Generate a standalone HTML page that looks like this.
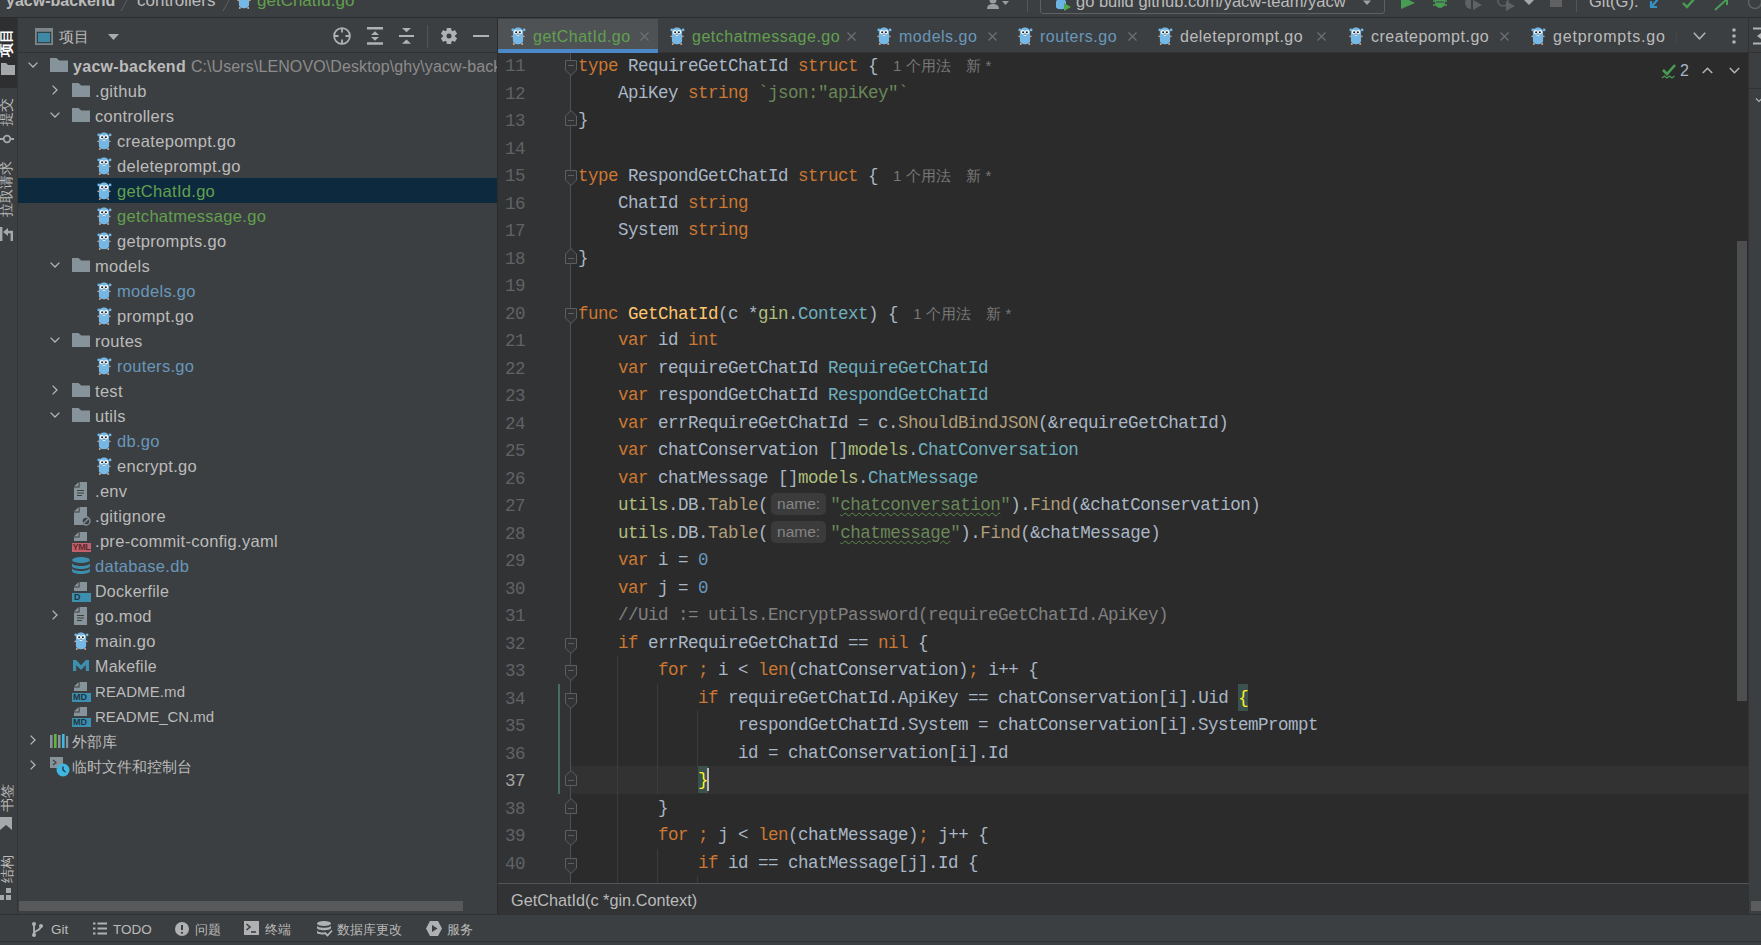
<!DOCTYPE html><html><head><meta charset="utf-8"><style>
*{margin:0;padding:0;box-sizing:border-box}
html,body{width:1761px;height:945px;overflow:hidden;background:#3c3f41;font-family:"Liberation Sans",sans-serif;color:#bbbbbb}
.a{position:absolute}
svg.a{overflow:visible}
.t{position:absolute;white-space:pre;line-height:25px;font-size:16.5px;letter-spacing:0.3px;margin-top:1px}
.code{position:absolute;left:578px;margin-top:1px;white-space:pre;font-family:"Liberation Mono",monospace;font-size:17.5px;letter-spacing:-0.5px;line-height:27.5px;height:27.5px;color:#a9b7c6}
.k{color:#cc7832}.s{color:#6a8759}.n{color:#6897bb}.p{color:#afbf7e}.ty{color:#6fafbd}.fn{color:#ffc66d}.mc{color:#b09d79}.cm{color:#808080}
.ln{position:absolute;left:499px;width:26px;text-align:right;font-family:"Liberation Mono",monospace;font-size:17.5px;letter-spacing:-0.5px;margin-top:2px;color:#606366;line-height:27.5px}
.hint{font-family:"Liberation Sans",sans-serif;font-size:15px;letter-spacing:0;color:#787878;margin-left:15px}
.tab{position:absolute;top:22px;height:30px;line-height:30px;font-size:16px;letter-spacing:0.5px;white-space:pre}
.bt{position:absolute;top:914px;line-height:31px;font-size:13.5px;color:#bbbbbb;white-space:pre}
.inl{display:inline-block;font-family:"Liberation Sans",sans-serif;font-size:15.5px;letter-spacing:0;color:#858585;background:#3b3b3b;border-radius:5px;padding:0 6px 0 6px;margin:0 4px 0 3px;line-height:22px;height:22px;vertical-align:1px}
.sq{text-decoration:underline wavy #5b8a49;text-decoration-thickness:1px;text-underline-offset:2px}
.bm{color:#ffef28}
.vt{position:absolute;font-size:13.5px;line-height:17px;white-space:pre;color:#bbbbbb}
</style></head><body>
<svg width="0" height="0" style="position:absolute">
<defs>
<symbol id="go" viewBox="0 0 13 19" overflow="visible">
 <circle cx="0.8" cy="3.9" r="1.4" fill="#75b8e6"/><circle cx="12.1" cy="3.9" r="1.4" fill="#75b8e6"/>
 <path d="M0.9 6.5C0.9 -0.3 11.1 -0.3 11.1 6.5V14.5C11.1 19.6 0.9 19.6 0.9 14.5Z" fill="#75b8e6"/>
 <circle cx="3.8" cy="6.1" r="2.1" fill="#fff"/><circle cx="8.2" cy="6.1" r="2.1" fill="#fff"/>
 <circle cx="4.1" cy="6.2" r="0.95" fill="#111"/><circle cx="7.9" cy="6.2" r="0.95" fill="#111"/>
 <ellipse cx="6" cy="9" rx="1.4" ry="1.1" fill="#e8f0f5"/>
 <ellipse cx="6" cy="8.5" rx="0.9" ry="0.6" fill="#8a6a55"/>
 <circle cx="0.2" cy="10.4" r="0.8" fill="#d7a988"/><circle cx="11.8" cy="10.4" r="0.8" fill="#d7a988"/>
 <circle cx="1.8" cy="17.9" r="1" fill="#d7a988"/><circle cx="10.2" cy="17.9" r="1" fill="#d7a988"/>
</symbol>
<symbol id="fold" viewBox="0 0 18 14"><path d="M0 0H6.5L9.2 2.6H18V14H0Z" fill="#87939a"/></symbol>
<symbol id="file" viewBox="0 0 13 18"><path d="M5.6 0H13V18H0V5.6H5.6Z" fill="#87939a"/><path d="M0 4.6L4.6 0V4.6Z" fill="#87939a"/></symbol>
<symbol id="chd" viewBox="0 0 10 6"><path d="M0.6 0.6L5 5L9.4 0.6" fill="none" stroke="#b4b6b8" stroke-width="1.3"/></symbol>
<symbol id="chr" viewBox="0 0 6 10"><path d="M0.6 0.6L5 5L0.6 9.4" fill="none" stroke="#b4b6b8" stroke-width="1.3"/></symbol>
<symbol id="x" viewBox="0 0 9 9"><path d="M0.5 0.5L8.5 8.5M8.5 0.5L0.5 8.5" stroke="#6e7072" stroke-width="1.2"/></symbol>
<symbol id="foldo" viewBox="0 0 12 16"><path d="M0.5 0.5H11.5V10L6 15.5L0.5 10Z" fill="#313335" stroke="#5c5f61" stroke-width="1"/><path d="M3 5.5H9" stroke="#5c5f61" stroke-width="1"/></symbol>
<symbol id="foldc" viewBox="0 0 12 16"><path d="M0.5 15.5H11.5V6L6 0.5L0.5 6Z" fill="#313335" stroke="#5c5f61" stroke-width="1"/><path d="M3 10.5H9" stroke="#5c5f61" stroke-width="1"/></symbol>
</defs></svg>
<div class="a" style="left:0;top:0;width:1761px;height:18px;background:#3c3f41;border-bottom:1px solid #2b2b2b"></div><div class="a" style="left:6px;top:-12px;font-size:16px;font-weight:bold;line-height:25px;white-space:pre;color:#bbbbbb">yacw-backend</div><svg class="a" style="left:120px;top:0px;" width="8" height="12" viewBox="0 0 8 12"><path d="M7 0L1 11" stroke="#5e6164" stroke-width="1"/></svg><div class="a" style="left:137px;top:-12px;font-size:17px;line-height:25px;white-space:pre;color:#bbbbbb">controllers</div><svg class="a" style="left:222px;top:0px;" width="8" height="12" viewBox="0 0 8 12"><path d="M7 0L1 11" stroke="#5e6164" stroke-width="1"/></svg><svg class="a" style="left:238px;top:-10px" width="13" height="19"><use href="#go"/></svg><div class="a" style="left:257px;top:-12px;font-size:17px;line-height:25px;white-space:pre;color:#62a04f">getChatId.go</div><svg class="a" style="left:985px;top:0px;" width="26" height="10" viewBox="0 0 26 10"><path d="M2 9C2 5 5 4 8 4C11 4 14 5 14 9Z" fill="#9a9c9e"/><circle cx="8" cy="0" r="3.5" fill="#9a9c9e"/><path d="M17 1H24L20.5 5Z" fill="#9a9c9e"/></svg><div class="a" style="left:1027px;top:0;width:1px;height:12px;background:#555"></div><div class="a" style="left:1040px;top:-12px;width:345px;height:26px;border:1px solid #5e6162;border-radius:3px"></div><svg class="a" style="left:1055px;top:0px;" width="17" height="12" viewBox="0 0 17 12"><path d="M1 2C1 -2 11 -2 11 2V7C11 10 1 10 1 7Z" fill="#6cb4e4"/><path d="M9 3L16 7L9 11Z" fill="#4fa849"/></svg><div class="a" style="left:1076px;top:-11px;font-size:16.5px;line-height:25px;white-space:pre;color:#bbbbbb">go build github.com/yacw-team/yacw</div><svg class="a" style="left:1363px;top:0px;" width="9" height="6" viewBox="0 0 9 6"><path d="M0 0.5H8L4 5Z" fill="#a0a2a4"/></svg><svg class="a" style="left:1401px;top:0px;" width="14" height="9" viewBox="0 0 14 9"><path d="M0 -4L14 3L0 9Z" fill="#499c54"/></svg><svg class="a" style="left:1432px;top:0px;" width="16" height="9" viewBox="0 0 16 9"><ellipse cx="8" cy="2" rx="5" ry="6" fill="#499c54"/><path d="M1 1H15M1 5H15" stroke="#499c54" stroke-width="1.5"/><path d="M4 2H12" stroke="#3c3f41" stroke-width="1"/></svg><svg class="a" style="left:1463px;top:0px;" width="20" height="10" viewBox="0 0 20 10"><path d="M8 -3A6 6 0 1 0 8 9Z" fill="#5f6163"/><path d="M10 0L19 5L10 10Z" fill="#5f6163"/></svg><svg class="a" style="left:1497px;top:0px;" width="20" height="10" viewBox="0 0 20 10"><circle cx="6" cy="1" r="5" fill="none" stroke="#5f6163" stroke-width="1.5"/><path d="M9 1L18 6L9 11Z" fill="#5f6163"/></svg><svg class="a" style="left:1524px;top:0px;" width="10" height="6" viewBox="0 0 10 6"><path d="M0 0H10L5 5Z" fill="#a5a7a9"/></svg><svg class="a" style="left:1550px;top:0px;" width="12" height="7" viewBox="0 0 12 7"><rect x="0" y="-5" width="12" height="12" fill="#5f6163"/></svg><div class="a" style="left:1576px;top:0;width:1px;height:12px;background:#555"></div><div class="a" style="left:1589px;top:-11px;font-size:16.5px;line-height:25px;white-space:pre;color:#bbbbbb">Git(G):</div><svg class="a" style="left:1650px;top:0px;" width="10" height="9" viewBox="0 0 10 9"><path d="M9 -2L2 6M1 1V7H7" stroke="#3592c4" stroke-width="2.2" fill="none"/></svg><svg class="a" style="left:1682px;top:0px;" width="14" height="9" viewBox="0 0 14 9"><path d="M1 3L5 7L13 -2" stroke="#499c54" stroke-width="2.4" fill="none"/></svg><svg class="a" style="left:1714px;top:0px;" width="15" height="11" viewBox="0 0 15 11"><path d="M1 10L13 -1M7 -1H13V5" stroke="#499c54" stroke-width="2" fill="none"/></svg><svg class="a" style="left:1746px;top:0px;" width="15" height="10" viewBox="0 0 15 10"><circle cx="9" cy="2" r="6.5" fill="none" stroke="#5f6163" stroke-width="1.5"/></svg><div class="a" style="left:0;top:18px;width:18px;height:896px;background:#3c3f41;border-right:1px solid #323435"></div><div class="a" style="left:0;top:18px;width:17px;height:70px;background:#2d2f31"></div><div class="vt" style="left:0;top:31px;width:17px;height:26px;"><div style="position:absolute;left:-2px;top:26px;width:max-content;white-space:nowrap;transform-origin:0 0;transform:rotate(-90deg);color:#ffffff;font-weight:bold">项目</div></div><svg class="a" style="left:1px;top:63px;" width="14" height="12" viewBox="0 0 14 12"><path d="M0 0H5L7 2H14V12H0Z" fill="#a5a8aa"/></svg><div class="vt" style="left:0;top:98px;width:17px;height:28px;"><div style="position:absolute;left:-2px;top:28px;width:max-content;white-space:nowrap;transform-origin:0 0;transform:rotate(-90deg)">提交</div></div><svg class="a" style="left:0px;top:134px;" width="14" height="10" viewBox="0 0 14 10"><circle cx="7" cy="5" r="3.3" fill="none" stroke="#a5a8aa" stroke-width="1.8"/><path d="M0 5H3.5M10.5 5H14" stroke="#a5a8aa" stroke-width="1.8"/></svg><div class="vt" style="left:0;top:161px;width:17px;height:56px;"><div style="position:absolute;left:-2px;top:56px;width:max-content;white-space:nowrap;transform-origin:0 0;transform:rotate(-90deg)">拉取请求</div></div><svg class="a" style="left:0px;top:227px;" width="14" height="14" viewBox="0 0 14 14"><path d="M1.2 0V14" stroke="#a5a8aa" stroke-width="2.4"/><path d="M3 5L8 1V9Z" fill="#a5a8aa"/><path d="M7 5H11.8V14" stroke="#a5a8aa" stroke-width="2.4" fill="none"/></svg><div class="vt" style="left:0;top:784px;width:17px;height:28px;"><div style="position:absolute;left:-1px;top:28px;width:max-content;white-space:nowrap;transform-origin:0 0;transform:rotate(-90deg)">书签</div></div><svg class="a" style="left:0px;top:817px;" width="12" height="14" viewBox="0 0 12 14"><path d="M0 0H12V13L6 8L0 13Z" fill="#a5a8aa"/></svg><div class="vt" style="left:0;top:855px;width:17px;height:28px;"><div style="position:absolute;left:-1px;top:28px;width:max-content;white-space:nowrap;transform-origin:0 0;transform:rotate(-90deg)">结构</div></div><svg class="a" style="left:-1px;top:888px;" width="12" height="12" viewBox="0 0 12 12"><rect x="7" y="0" width="5" height="5" fill="#a5a8aa"/><rect x="0" y="7" width="5" height="5" fill="#a5a8aa"/><rect x="7" y="7" width="5" height="5" fill="#a5a8aa"/></svg><div class="a" style="left:18px;top:18px;width:480px;height:896px;background:#3c3f41"></div><div class="a" style="left:18px;top:52px;width:480px;height:1px;background:#323232"></div><svg class="a" style="left:35px;top:28px;" width="18" height="17" viewBox="0 0 18 17"><rect x="0" y="0" width="18" height="17" fill="#7d868b"/><rect x="1.8" y="3.8" width="14.4" height="11.4" fill="#2f3234"/><rect x="2.8" y="4.8" width="12.4" height="9.4" fill="#3e8aa6"/></svg><div class="a" style="left:59px;top:24px;font-size:15px;line-height:25px;white-space:pre;color:#bbbbbb">项目</div><svg class="a" style="left:108px;top:34px;" width="12" height="6" viewBox="0 0 12 6"><path d="M0 0H11L5.5 6Z" fill="#a9abad"/></svg><svg class="a" style="left:333px;top:27px;" width="19" height="19" viewBox="0 0 19 19"><circle cx="9" cy="9" r="7.9" fill="none" stroke="#afb1b3" stroke-width="1.8"/><path d="M9 1V5.5M9 12.5V17M1 9H5.5M12.5 9H17" stroke="#afb1b3" stroke-width="1.8"/></svg><svg class="a" style="left:367px;top:27px;" width="16" height="18" viewBox="0 0 16 18"><path d="M0 1.3H16M0 16.5H16" stroke="#afb1b3" stroke-width="2.4"/><path d="M4 8L8 4.2L12 8ZM4 10L8 13.8L12 10Z" fill="#afb1b3"/></svg><svg class="a" style="left:399px;top:27px;" width="16" height="18" viewBox="0 0 16 18"><path d="M0 9H15" stroke="#afb1b3" stroke-width="2"/><path d="M3 1H12L7.5 5.3ZM3 16.7H12L7.5 12.5Z" fill="#afb1b3"/></svg><div class="a" style="left:427px;top:25px;width:1px;height:23px;background:#515456"></div><svg class="a" style="left:441px;top:28px;" width="16" height="16" viewBox="0 0 16 16"><path d="M13.97 8.62 L16.11 10.19 L13.95 13.93 L11.52 12.86 L10.45 13.48 L10.16 16.12 L5.84 16.12 L5.55 13.48 L4.48 12.86 L2.05 13.93 L-0.11 10.19 L2.03 8.62 L2.03 7.38 L-0.11 5.81 L2.05 2.07 L4.48 3.14 L5.55 2.52 L5.84 -0.12 L10.16 -0.12 L10.45 2.52 L11.52 3.14 L13.95 2.07 L16.11 5.81 L13.97 7.38Z" fill="#afb1b3"/><circle cx="8" cy="8" r="6.1" fill="#afb1b3"/><circle cx="8" cy="8" r="2.5" fill="#3c3f41"/></svg><div class="a" style="left:473px;top:35px;width:16px;height:2.4px;background:#afb1b3"></div><div class="a" style="left:18px;top:178px;width:479px;height:25px;background:#0d293e"></div><div class="a" style="left:18px;top:53px;width:479px;height:848px;overflow:hidden"><svg class="a" style="left:10px;top:9px;" width="10" height="6"><use href="#chd"/></svg><svg class="a" style="left:32px;top:5px;" width="18" height="14"><use href="#fold"/></svg><div class="t" style="left:55px;top:0px;"><span style="color:#bbbbbb"><b style="font-size:16px">yacw-backend</b> <span style="color:#8c8c8c;font-size:16px;letter-spacing:0.1px">C:\Users\LENOVO\Desktop\ghy\yacw-backend</span></span></div><svg class="a" style="left:34px;top:32px;" width="6" height="10"><use href="#chr"/></svg><svg class="a" style="left:54px;top:30px;" width="18" height="14"><use href="#fold"/></svg><div class="t" style="left:77px;top:25px;"><span style="color:#bbbbbb">.github</span></div><svg class="a" style="left:32px;top:59px;" width="10" height="6"><use href="#chd"/></svg><svg class="a" style="left:54px;top:55px;" width="18" height="14"><use href="#fold"/></svg><div class="t" style="left:77px;top:50px;"><span style="color:#bbbbbb">controllers</span></div><svg class="a" style="left:80px;top:78px;" width="13" height="19"><use href="#go"/></svg><div class="t" style="left:99px;top:75px;"><span style="color:#bbbbbb">createpompt.go</span></div><svg class="a" style="left:80px;top:103px;" width="13" height="19"><use href="#go"/></svg><div class="t" style="left:99px;top:100px;"><span style="color:#bbbbbb">deleteprompt.go</span></div><svg class="a" style="left:80px;top:128px;" width="13" height="19"><use href="#go"/></svg><div class="t" style="left:99px;top:125px;"><span style="color:#62a04f">getChatId.go</span></div><svg class="a" style="left:80px;top:153px;" width="13" height="19"><use href="#go"/></svg><div class="t" style="left:99px;top:150px;"><span style="color:#62a04f">getchatmessage.go</span></div><svg class="a" style="left:80px;top:178px;" width="13" height="19"><use href="#go"/></svg><div class="t" style="left:99px;top:175px;"><span style="color:#bbbbbb">getprompts.go</span></div><svg class="a" style="left:32px;top:209px;" width="10" height="6"><use href="#chd"/></svg><svg class="a" style="left:54px;top:205px;" width="18" height="14"><use href="#fold"/></svg><div class="t" style="left:77px;top:200px;"><span style="color:#bbbbbb">models</span></div><svg class="a" style="left:80px;top:228px;" width="13" height="19"><use href="#go"/></svg><div class="t" style="left:99px;top:225px;"><span style="color:#6897bb">models.go</span></div><svg class="a" style="left:80px;top:253px;" width="13" height="19"><use href="#go"/></svg><div class="t" style="left:99px;top:250px;"><span style="color:#bbbbbb">prompt.go</span></div><svg class="a" style="left:32px;top:284px;" width="10" height="6"><use href="#chd"/></svg><svg class="a" style="left:54px;top:280px;" width="18" height="14"><use href="#fold"/></svg><div class="t" style="left:77px;top:275px;"><span style="color:#bbbbbb">routes</span></div><svg class="a" style="left:80px;top:303px;" width="13" height="19"><use href="#go"/></svg><div class="t" style="left:99px;top:300px;"><span style="color:#6897bb">routers.go</span></div><svg class="a" style="left:34px;top:332px;" width="6" height="10"><use href="#chr"/></svg><svg class="a" style="left:54px;top:330px;" width="18" height="14"><use href="#fold"/></svg><div class="t" style="left:77px;top:325px;"><span style="color:#bbbbbb">test</span></div><svg class="a" style="left:32px;top:359px;" width="10" height="6"><use href="#chd"/></svg><svg class="a" style="left:54px;top:355px;" width="18" height="14"><use href="#fold"/></svg><div class="t" style="left:77px;top:350px;"><span style="color:#bbbbbb">utils</span></div><svg class="a" style="left:80px;top:378px;" width="13" height="19"><use href="#go"/></svg><div class="t" style="left:99px;top:375px;"><span style="color:#6897bb">db.go</span></div><svg class="a" style="left:80px;top:403px;" width="13" height="19"><use href="#go"/></svg><div class="t" style="left:99px;top:400px;"><span style="color:#bbbbbb">encrypt.go</span></div><svg class="a" style="left:56px;top:429px;" width="13" height="18"><use href="#file"/></svg><svg class="a" style="left:59px;top:437px;" width="7" height="7" viewBox="0 0 7 7"><path d="M0 0.5H7M0 3H7M0 5.5H5" stroke="#3c3f41" stroke-width="1"/></svg><div class="t" style="left:77px;top:425px;"><span style="color:#bbbbbb">.env</span></div><svg class="a" style="left:56px;top:454px;" width="13" height="18"><use href="#file"/></svg><svg class="a" style="left:63px;top:463px;" width="10" height="10" viewBox="0 0 10 10"><circle cx="5" cy="5" r="4" fill="#3c3f41" stroke="#87939a" stroke-width="1.3"/><path d="M2.5 7.5L7.5 2.5" stroke="#87939a" stroke-width="1.3"/></svg><div class="t" style="left:77px;top:450px;"><span style="color:#bbbbbb">.gitignore</span></div><svg class="a" style="left:56px;top:479px;" width="13" height="9" viewBox="0 0 13 9"><path d="M5.6 0H13V9H0V5.6H5.6Z" fill="#87939a"/><path d="M0 4.6L4.6 0V4.6Z" fill="#87939a"/></svg><div class="a" style="left:54px;top:490px;width:19px;height:9px;background:#c3606a;color:#5a2a30;font-size:9px;line-height:9px;text-align:center;font-weight:bold;letter-spacing:-0.3px">YML</div><div class="t" style="left:77px;top:475px;"><span style="color:#bbbbbb">.pre-commit-config.yaml</span></div><svg class="a" style="left:54px;top:504px;" width="18" height="18" viewBox="0 0 18 18"><ellipse cx="9" cy="3" rx="9" ry="3" fill="#3d8fb0"/><path d="M0 6C0 10 18 10 18 6V9C18 13 0 13 0 9Z" fill="#3d8fb0"/><path d="M0 11C0 15 18 15 18 11V14C18 18 0 18 0 14Z" fill="#3d8fb0"/></svg><div class="t" style="left:77px;top:500px;"><span style="color:#6897bb">database.db</span></div><svg class="a" style="left:56px;top:529px;" width="13" height="9" viewBox="0 0 13 9"><path d="M5.6 0H13V9H0V5.6H5.6Z" fill="#87939a"/><path d="M0 4.6L4.6 0V4.6Z" fill="#87939a"/></svg><div class="a" style="left:54px;top:540px;width:19px;height:9px;background:#3d8fb0;color:#1f3540;font-size:9px;line-height:9px;padding-left:2px;font-weight:bold">D</div><div class="t" style="left:77px;top:525px;"><span style="color:#bbbbbb"><span style="font-size:16px">Dockerfile</span></span></div><svg class="a" style="left:34px;top:557px;" width="6" height="10"><use href="#chr"/></svg><svg class="a" style="left:56px;top:554px;" width="13" height="18"><use href="#file"/></svg><svg class="a" style="left:59px;top:562px;" width="7" height="7" viewBox="0 0 7 7"><path d="M0 0.5H7M0 3H7M0 5.5H5" stroke="#3c3f41" stroke-width="1"/></svg><div class="t" style="left:77px;top:550px;"><span style="color:#bbbbbb">go.mod</span></div><svg class="a" style="left:57px;top:578px;" width="13" height="19"><use href="#go"/></svg><div class="t" style="left:77px;top:575px;"><span style="color:#bbbbbb">main.go</span></div><svg class="a" style="left:55px;top:607px;" width="16" height="11" viewBox="0 0 16 11"><path d="M0 11V0H3.2L8 5.2L12.8 0H16V11H12.8V5L8 10L3.2 5V11Z" fill="#3d8fb0"/></svg><div class="t" style="left:77px;top:600px;"><span style="color:#bbbbbb"><span style="font-size:16px">Makefile</span></span></div><svg class="a" style="left:56px;top:629px;" width="13" height="9" viewBox="0 0 13 9"><path d="M5.6 0H13V9H0V5.6H5.6Z" fill="#87939a"/><path d="M0 4.6L4.6 0V4.6Z" fill="#87939a"/></svg><div class="a" style="left:54px;top:640px;width:19px;height:9px;background:#3d8fb0;color:#1f3540;font-size:9px;line-height:9px;padding-left:1px;font-weight:bold">MD</div><div class="t" style="left:77px;top:625px;"><span style="color:#bbbbbb"><span style="font-size:15px;letter-spacing:0.1px">README.md</span></span></div><svg class="a" style="left:56px;top:654px;" width="13" height="9" viewBox="0 0 13 9"><path d="M5.6 0H13V9H0V5.6H5.6Z" fill="#87939a"/><path d="M0 4.6L4.6 0V4.6Z" fill="#87939a"/></svg><div class="a" style="left:54px;top:665px;width:19px;height:9px;background:#3d8fb0;color:#1f3540;font-size:9px;line-height:9px;padding-left:1px;font-weight:bold">MD</div><div class="t" style="left:77px;top:650px;"><span style="color:#bbbbbb"><span style="font-size:15px;letter-spacing:0">README_CN.md</span></span></div><svg class="a" style="left:12px;top:682px;" width="6" height="10"><use href="#chr"/></svg><svg class="a" style="left:32px;top:681px;" width="18" height="14" viewBox="0 0 18 14"><rect x="0" y="1" width="2.6" height="13" fill="#87939a"/><rect x="4" y="0" width="2.6" height="14" fill="#62b543"/><rect x="8" y="1" width="2.6" height="13" fill="#87939a"/><rect x="12" y="0" width="2.6" height="14" fill="#40b6e0"/><rect x="16" y="2" width="2.2" height="12" fill="#87939a"/></svg><div class="t" style="left:54px;top:675px;"><span style="color:#bbbbbb"><span style="font-size:15px;letter-spacing:0">外部库</span></span></div><svg class="a" style="left:12px;top:707px;" width="6" height="10"><use href="#chr"/></svg><svg class="a" style="left:32px;top:704px;" width="20" height="20" viewBox="0 0 20 20"><rect x="0" y="0" width="13" height="11" fill="#87939a"/><path d="M3 3L6 5.5L3 8" stroke="#3c3f41" stroke-width="1.2" fill="none"/><circle cx="13" cy="13" r="6.5" fill="#40b6e0"/><path d="M13 9.5V13L15.5 15" stroke="#1d3b47" stroke-width="1.4" fill="none"/></svg><div class="t" style="left:54px;top:700px;"><span style="color:#bbbbbb"><span style="font-size:15px;letter-spacing:0">临时文件和控制台</span></span></div></div><div class="a" style="left:19px;top:901px;width:444px;height:10px;background:#57595b"></div><div class="a" style="left:497px;top:18px;width:1px;height:896px;background:#2b2b2b"></div><div class="a" style="left:498px;top:18px;width:1251px;height:35px;background:#3c3f41;border-bottom:1px solid #323232"></div><div class="a" style="left:498px;top:19px;width:160px;height:30px;background:#4e5254"></div><div class="a" style="left:498px;top:49px;width:160px;height:4px;background:#4a88c7"></div><svg class="a" style="left:512px;top:26px;" width="13" height="19"><use href="#go"/></svg><div class="tab" style="left:533px;color:#62a04f">getChatId.go</div><svg class="a" style="left:640px;top:32px;" width="9" height="9"><use href="#x"/></svg><svg class="a" style="left:671px;top:26px;" width="13" height="19"><use href="#go"/></svg><div class="tab" style="left:692px;color:#62a04f">getchatmessage.go</div><svg class="a" style="left:847px;top:32px;" width="9" height="9"><use href="#x"/></svg><svg class="a" style="left:878px;top:26px;" width="13" height="19"><use href="#go"/></svg><div class="tab" style="left:899px;color:#6897bb">models.go</div><svg class="a" style="left:988px;top:32px;" width="9" height="9"><use href="#x"/></svg><svg class="a" style="left:1019px;top:26px;" width="13" height="19"><use href="#go"/></svg><div class="tab" style="left:1040px;color:#6897bb">routers.go</div><svg class="a" style="left:1128px;top:32px;" width="9" height="9"><use href="#x"/></svg><svg class="a" style="left:1159px;top:26px;" width="13" height="19"><use href="#go"/></svg><div class="tab" style="left:1180px;color:#bbbbbb">deleteprompt.go</div><svg class="a" style="left:1317px;top:32px;" width="9" height="9"><use href="#x"/></svg><svg class="a" style="left:1350px;top:26px;" width="13" height="19"><use href="#go"/></svg><div class="tab" style="left:1371px;color:#bbbbbb">createpompt.go</div><svg class="a" style="left:1500px;top:32px;" width="9" height="9"><use href="#x"/></svg><svg class="a" style="left:1532px;top:26px;" width="13" height="19"><use href="#go"/></svg><div class="tab" style="left:1553px;color:#bbbbbb"><span style="letter-spacing:0.8px">getprompts.go</span></div><svg class="a" style="left:1693px;top:32px;" width="13" height="8" viewBox="0 0 13 8"><path d="M0.8 0.8L6.5 6.8L12.2 0.8" stroke="#afb1b3" stroke-width="1.6" fill="none"/></svg><svg class="a" style="left:1731px;top:27px;" width="6" height="18" viewBox="0 0 6 18"><circle cx="3" cy="3" r="1.8" fill="#afb1b3"/><circle cx="3" cy="9" r="1.8" fill="#afb1b3"/><circle cx="3" cy="15" r="1.8" fill="#afb1b3"/></svg><div class="a" style="left:498px;top:53px;width:1251px;height:830px;background:#2b2b2b"></div><div class="a" style="left:498px;top:53px;width:73px;height:830px;background:#313335"></div><div class="a" style="left:571px;top:766.0px;width:1178px;height:27.5px;background:#323232"></div><div class="a" style="left:498px;top:766.0px;width:73px;height:27.5px;background:#313335"></div><div class="a" style="left:698px;top:766.0px;width:10px;height:27px;background:#3b514d"></div><div class="a" style="left:1238px;top:683.5px;width:10px;height:27px;background:#3b514d"></div><div class="ln" style="top:51.0px;color:#606366">11</div><div class="code" style="top:51.0px"><span class="k">type</span> RequireGetChatId <span class="k">struct</span> {<span class="hint"><span>1</span><span style="margin-left:5px">个用法</span><span style="margin-left:15px">新</span><span style="margin-left:4px">*</span></span></div><div class="ln" style="top:78.5px;color:#606366">12</div><div class="code" style="top:78.5px">    ApiKey <span class="k">string</span> <span class="s">`json:"apiKey"`</span></div><div class="ln" style="top:106.0px;color:#606366">13</div><div class="code" style="top:106.0px">}</div><div class="ln" style="top:133.5px;color:#606366">14</div><div class="code" style="top:133.5px"></div><div class="ln" style="top:161.0px;color:#606366">15</div><div class="code" style="top:161.0px"><span class="k">type</span> RespondGetChatId <span class="k">struct</span> {<span class="hint"><span>1</span><span style="margin-left:5px">个用法</span><span style="margin-left:15px">新</span><span style="margin-left:4px">*</span></span></div><div class="ln" style="top:188.5px;color:#606366">16</div><div class="code" style="top:188.5px">    ChatId <span class="k">string</span></div><div class="ln" style="top:216.0px;color:#606366">17</div><div class="code" style="top:216.0px">    System <span class="k">string</span></div><div class="ln" style="top:243.5px;color:#606366">18</div><div class="code" style="top:243.5px">}</div><div class="ln" style="top:271.0px;color:#606366">19</div><div class="code" style="top:271.0px"></div><div class="ln" style="top:298.5px;color:#606366">20</div><div class="code" style="top:298.5px"><span class="k">func</span> <span class="fn">GetChatId</span>(c *<span class="p">gin</span>.<span class="ty">Context</span>) {<span class="hint"><span>1</span><span style="margin-left:5px">个用法</span><span style="margin-left:15px">新</span><span style="margin-left:4px">*</span></span></div><div class="ln" style="top:326.0px;color:#606366">21</div><div class="code" style="top:326.0px">    <span class="k">var</span> id <span class="k">int</span></div><div class="ln" style="top:353.5px;color:#606366">22</div><div class="code" style="top:353.5px">    <span class="k">var</span> requireGetChatId <span class="ty">RequireGetChatId</span></div><div class="ln" style="top:381.0px;color:#606366">23</div><div class="code" style="top:381.0px">    <span class="k">var</span> respondGetChatId <span class="ty">RespondGetChatId</span></div><div class="ln" style="top:408.5px;color:#606366">24</div><div class="code" style="top:408.5px">    <span class="k">var</span> errRequireGetChatId = c.<span class="mc">ShouldBindJSON</span>(&amp;requireGetChatId)</div><div class="ln" style="top:436.0px;color:#606366">25</div><div class="code" style="top:436.0px">    <span class="k">var</span> chatConservation []<span class="p">models</span>.<span class="ty">ChatConversation</span></div><div class="ln" style="top:463.5px;color:#606366">26</div><div class="code" style="top:463.5px">    <span class="k">var</span> chatMessage []<span class="p">models</span>.<span class="ty">ChatMessage</span></div><div class="ln" style="top:491.0px;color:#606366">27</div><div class="code" style="top:491.0px">    <span class="p">utils</span>.DB.<span class="mc">Table</span>(<span class="inl">name:</span><span class="s">"<span class="sq">chatconversation</span>"</span>).<span class="mc">Find</span>(&amp;chatConservation)</div><div class="ln" style="top:518.5px;color:#606366">28</div><div class="code" style="top:518.5px">    <span class="p">utils</span>.DB.<span class="mc">Table</span>(<span class="inl">name:</span><span class="s">"<span class="sq">chatmessage</span>"</span>).<span class="mc">Find</span>(&amp;chatMessage)</div><div class="ln" style="top:546.0px;color:#606366">29</div><div class="code" style="top:546.0px">    <span class="k">var</span> i = <span class="n">0</span></div><div class="ln" style="top:573.5px;color:#606366">30</div><div class="code" style="top:573.5px">    <span class="k">var</span> j = <span class="n">0</span></div><div class="ln" style="top:601.0px;color:#606366">31</div><div class="code" style="top:601.0px">    <span class="cm">//Uid := utils.EncryptPassword(requireGetChatId.ApiKey)</span></div><div class="ln" style="top:628.5px;color:#606366">32</div><div class="code" style="top:628.5px">    <span class="k">if</span> errRequireGetChatId == <span class="k">nil</span> {</div><div class="ln" style="top:656.0px;color:#606366">33</div><div class="code" style="top:656.0px">        <span class="k">for</span> <span class="k">;</span> i &lt; <span class="k">len</span>(chatConservation)<span class="k">;</span> i++ {</div><div class="ln" style="top:683.5px;color:#606366">34</div><div class="code" style="top:683.5px">            <span class="k">if</span> requireGetChatId.ApiKey == chatConservation[i].Uid <span class="bm">{</span></div><div class="ln" style="top:711.0px;color:#606366">35</div><div class="code" style="top:711.0px">                respondGetChatId.System = chatConservation[i].SystemPrompt</div><div class="ln" style="top:738.5px;color:#606366">36</div><div class="code" style="top:738.5px">                id = chatConservation[i].Id</div><div class="ln" style="top:766.0px;color:#a4a3a3">37</div><div class="code" style="top:766.0px">            <span class="bm">}</span></div><div class="ln" style="top:793.5px;color:#606366">38</div><div class="code" style="top:793.5px">        }</div><div class="ln" style="top:821.0px;color:#606366">39</div><div class="code" style="top:821.0px">        <span class="k">for</span> <span class="k">;</span> j &lt; <span class="k">len</span>(chatMessage)<span class="k">;</span> j++ {</div><div class="ln" style="top:848.5px;color:#606366">40</div><div class="code" style="top:848.5px">            <span class="k">if</span> id == chatMessage[j].Id {</div><div class="a" style="left:570px;top:53px;width:1px;height:830px;background:#4e5052"></div><svg class="a" style="left:565px;top:60.0px;" width="12" height="16"><use href="#foldo"/></svg><svg class="a" style="left:565px;top:170.0px;" width="12" height="16"><use href="#foldo"/></svg><svg class="a" style="left:565px;top:307.5px;" width="12" height="16"><use href="#foldo"/></svg><svg class="a" style="left:565px;top:637.5px;" width="12" height="16"><use href="#foldo"/></svg><svg class="a" style="left:565px;top:665.0px;" width="12" height="16"><use href="#foldo"/></svg><svg class="a" style="left:565px;top:692.5px;" width="12" height="16"><use href="#foldo"/></svg><svg class="a" style="left:565px;top:830.0px;" width="12" height="16"><use href="#foldo"/></svg><svg class="a" style="left:565px;top:857.5px;" width="12" height="16"><use href="#foldo"/></svg><svg class="a" style="left:565px;top:110.0px;" width="12" height="16"><use href="#foldc"/></svg><svg class="a" style="left:565px;top:247.5px;" width="12" height="16"><use href="#foldc"/></svg><svg class="a" style="left:565px;top:770.0px;" width="12" height="16"><use href="#foldc"/></svg><svg class="a" style="left:565px;top:797.5px;" width="12" height="16"><use href="#foldc"/></svg><div class="a" style="left:558px;top:683.5px;width:2px;height:110.0px;background:#4a6b64"></div><div class="a" style="left:617px;top:656.0px;width:1px;height:227.0px;background:#3b3d3d"></div><div class="a" style="left:657px;top:683.5px;width:1px;height:110.0px;background:#3b3d3d"></div><div class="a" style="left:657px;top:848.5px;width:1px;height:34.5px;background:#3b3d3d"></div><div class="a" style="left:697px;top:711.0px;width:1px;height:55.0px;background:#3b3d3d"></div><div class="a" style="left:697px;top:876.0px;width:1px;height:7.0px;background:#3b3d3d"></div><div class="a" style="left:707px;top:768.0px;width:2px;height:23px;background:#bbbbbb"></div><div class="a" style="left:1737px;top:241px;width:10px;height:460px;background:#4d4e50"></div><svg class="a" style="left:1662px;top:64px;" width="14" height="15" viewBox="0 0 14 15"><path d="M1 6L5 10L13 1" stroke="#499c54" stroke-width="2.6" fill="none"/><path d="M0 14L2.5 12L5 14L7.5 12L10 14L12.5 12" stroke="#499c54" stroke-width="1.2" fill="none"/></svg><div class="a" style="left:1680px;top:58px;font-size:16px;line-height:25px;color:#a9b7c6">2</div><svg class="a" style="left:1702px;top:67px;" width="11" height="7" viewBox="0 0 11 7"><path d="M0.8 6L5.5 1.2L10.2 6" stroke="#b4b6b8" stroke-width="1.5" fill="none"/></svg><svg class="a" style="left:1729px;top:67px;" width="11" height="7" viewBox="0 0 11 7"><path d="M0.8 1L5.5 5.8L10.2 1" stroke="#b4b6b8" stroke-width="1.5" fill="none"/></svg><div class="a" style="left:1748px;top:18px;width:13px;height:896px;background:#3c3f41;border-left:1px solid #323232"></div><div class="a" style="left:1749px;top:52px;width:12px;height:1px;background:#323232"></div><div class="a" style="left:1749px;top:88px;width:12px;height:1px;background:#323232"></div><svg class="a" style="left:1753px;top:27px;" width="8" height="18" viewBox="0 0 8 18"><path d="M0 1.5H8M0 16.5H8" stroke="#afb1b3" stroke-width="2"/><path d="M8 6L4 9L8 12Z" fill="#afb1b3"/></svg><svg class="a" style="left:1756px;top:98px;" width="5" height="5" viewBox="0 0 5 5"><path d="M0 0.5L3 3.5L6 0.5" stroke="#afb1b3" stroke-width="1.2" fill="none"/></svg><div class="a" style="left:1751px;top:901px;width:10px;height:10px;background:#5a5c5e"></div><svg class="a" style="left:1675px;top:31px;" width="4" height="12" viewBox="0 0 4 12"><path d="M0.5 0.5Q3.5 6 0.5 11.5" stroke="#46494b" stroke-width="1" fill="none"/></svg><div class="a" style="left:498px;top:883px;width:1251px;height:31px;background:#313335;border-top:1px solid #555555"></div><div class="a" style="left:511px;top:888px;font-size:16.25px;line-height:25px;white-space:pre;color:#bbbbbb">GetChatId(c *gin.Context)</div><div class="a" style="left:0;top:914px;width:1761px;height:31px;background:#3c3f41;border-top:1px solid #323232"></div><svg class="a" style="left:31px;top:921px;" width="12" height="17" viewBox="0 0 12 17"><circle cx="3" cy="3" r="2" fill="#afb1b3"/><circle cx="3" cy="14" r="2" fill="#afb1b3"/><circle cx="10" cy="5" r="2" fill="#afb1b3"/><path d="M3 3V14M10 5C10 10 3 9 3 13" stroke="#afb1b3" stroke-width="1.8" fill="none"/></svg><div class="bt" style="left:51px">Git</div><svg class="a" style="left:93px;top:922px;" width="14" height="13" viewBox="0 0 14 13"><path d="M0 1.5H2.5M0 6.5H2.5M0 11.5H2.5M4.5 1.5H14M4.5 6.5H14M4.5 11.5H14" stroke="#afb1b3" stroke-width="2.2"/></svg><div class="bt" style="left:113px">TODO</div><svg class="a" style="left:175px;top:922px;" width="14" height="14" viewBox="0 0 14 14"><circle cx="7" cy="7" r="7" fill="#afb1b3"/><path d="M7 3V8" stroke="#3c3f41" stroke-width="2"/><circle cx="7" cy="10.8" r="1.1" fill="#3c3f41"/></svg><div class="bt" style="left:195px"><span style="font-size:13px">问题</span></div><svg class="a" style="left:244px;top:921px;" width="15" height="14" viewBox="0 0 15 14"><rect x="0" y="0" width="15" height="14" fill="#afb1b3"/><path d="M2.5 3L6 6L2.5 9" stroke="#3c3f41" stroke-width="1.6" fill="none"/><path d="M7 11H12" stroke="#3c3f41" stroke-width="1.6"/></svg><div class="bt" style="left:265px"><span style="font-size:13px">终端</span></div><svg class="a" style="left:317px;top:921px;" width="15" height="17" viewBox="0 0 15 17"><ellipse cx="7" cy="2.5" rx="7" ry="2.5" fill="#afb1b3"/><path d="M0 4.5C0 7.5 14 7.5 14 4.5V7C14 10 0 10 0 7Z" fill="#afb1b3"/><path d="M0 9C0 12 9 12 9 11V13C6 14 0 13 0 12Z" fill="#afb1b3"/><path d="M8 12L10.5 14.5L15 9.5" stroke="#afb1b3" stroke-width="1.8" fill="none"/></svg><div class="bt" style="left:337px"><span style="font-size:13px">数据库更改</span></div><svg class="a" style="left:426px;top:921px;" width="16" height="15" viewBox="0 0 16 15"><path d="M4 0H12L16 7.5L12 15H4L0 7.5Z" fill="#afb1b3"/><path d="M6 4L11.5 7.5L6 11Z" fill="#3c3f41"/></svg><div class="bt" style="left:447px"><span style="font-size:13px">服务</span></div><div class="a" style="left:0;top:941px;width:1761px;height:1px;background:#323232"></div></body></html>
